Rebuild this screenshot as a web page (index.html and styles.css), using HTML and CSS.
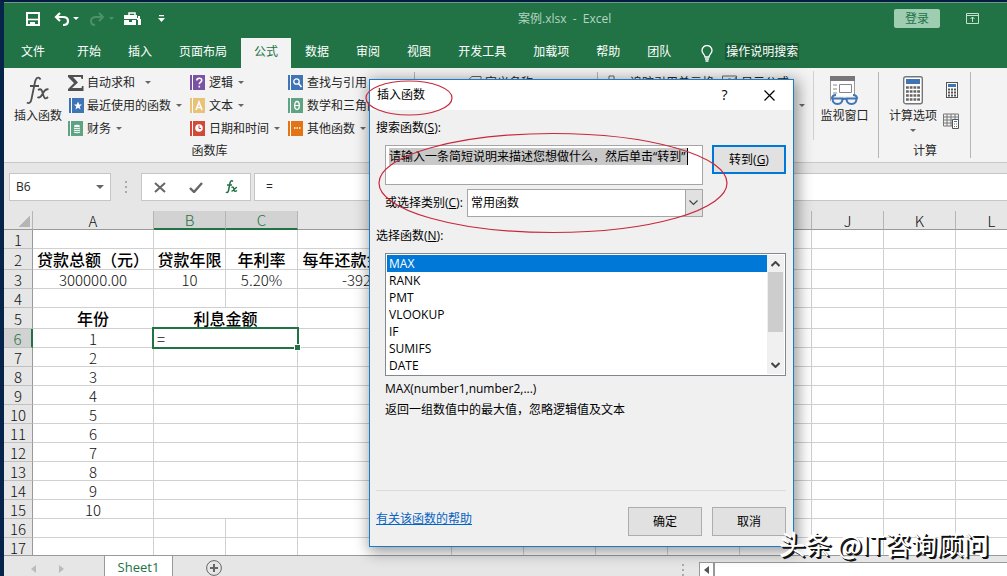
FILE: index.html
```html
<!DOCTYPE html>
<html lang="zh-CN">
<head>
<meta charset="utf-8">
<title>案例.xlsx - Excel</title>
<link rel="stylesheet" href="styles.css">
</head>
<body>
<div class="app">
  <header class="titlebar">
    <div class="quick">
      <button class="icon-btn save" aria-label="保存"><svg width="14" height="14" viewBox="0 0 14 14" fill="none" stroke="#fff" stroke-width="2"><path d="M1 1h12v12H1z"/><path d="M1 7.500h12" stroke-width="1.600"/><path d="M4 10h5v3H4z" fill="#fff" stroke="none"/></svg></button>
      <button class="icon-btn undo" aria-label="撤消"><svg width="26" height="14" viewBox="0 0 26 14" fill="none" stroke="#fff" stroke-width="2.200"><path d="M6 1 2 5l4 4M2 5h7q5 0 5 4t-5 4"/><path d="M19 5h6l-3 3z" fill="#fff" stroke="none"/></svg></button>
      <button class="icon-btn redo" aria-label="恢复"><svg width="26" height="14" viewBox="0 0 26 14" fill="none" stroke="#4c9169" stroke-width="2"><path d="m10 1 4 4-4 4M14 5H7Q2 5 2 9t4 4"/><path d="M20 5h5l-2.500 3z" fill="#4c9169" stroke="none"/></svg></button>
      <button class="icon-btn kit" aria-label="工具"><svg width="17" height="14" viewBox="0 0 17 14"><path d="M5 3V1h6v2" fill="none" stroke="#fff" stroke-width="1.500"/><path d="M0 3h13v4H0zM0 8h5v2h3V8h4v5H0z" fill="#fff"/><path d="M14 4h2v3h1v6h-3V8h-1V6h1z" fill="#fff"/></svg></button>
      <button class="icon-btn more" aria-label="自定义快速访问工具栏"><svg width="7" height="8" viewBox="0 0 7 8"><path d="M1 0h5v1.300H1zM0 3h7L3.500 7z" fill="#fff"/></svg></button>
    </div>
    <h1 class="doc-title">案例.xlsx&nbsp; -&nbsp; Excel</h1>
    <button class="login">登录</button>
    <button class="icon-btn" aria-label="功能区显示选项"><svg width="13" height="11" viewBox="0 0 13 11" fill="none" stroke="#c5e0cf"><path d="M.5.5h12v10H.5zM.5 2.500h12M6.500 9V4M4.500 6l2-2 2 2"/></svg></button>
  </header>

  <nav class="tabs">
    <button class="tab file">文件</button>
    <button class="tab">开始</button>
    <button class="tab">插入</button>
    <button class="tab">页面布局</button>
    <button class="tab active">公式</button>
    <button class="tab">数据</button>
    <button class="tab">审阅</button>
    <button class="tab">视图</button>
    <button class="tab">开发工具</button>
    <button class="tab">加载项</button>
    <button class="tab">帮助</button>
    <button class="tab">团队</button>
    <svg class="bulb" width="12" height="17" viewBox="0 0 12 17" fill="none" stroke="#fff" stroke-width="1.300"><path d="M4 12c0-2.500-3-3.300-3-6.500a5 5 0 0 1 10 0C11 8.700 8 9.500 8 12zM4 14h4M4.500 16h3"/></svg>
    <button class="tell">操作说明搜索</button>
  </nav>

  <section class="ribbon">
    <div class="group library">
      <div class="tools">
        <button class="big"><svg width="24" height="29" viewBox="0 0 24 29" fill="none" stroke="#505050" stroke-width="1.800"><path d="M14.500 3.500C13 .5 10 1 9 6L5.500 23c-.6 3.500-2.500 5-4.500 3.500M4 10h9"/><path d="M12 14c3-2 4 0 5 4s2 6 5 3M22.500 13.500c-3-1.500-4.500 2-6 4.500s-3 4.500-5 3"/></svg>插入函数</button>
        <div class="stack">
          <button class="cmd sum"><svg width="16" height="16" viewBox="0 0 16 16"><path d="M0 0h15v4h-1.500L13 2H5l5 5.500L4 13h9.500l.5-2h1.500v5H0v-2l6-6L0 2z" fill="#505050"/></svg><span>自动求和</span><i class="caret wide"></i></button>
          <button class="cmd"><svg width="16" height="16" viewBox="0 0 16 16"><path d="M1 0h15v15H1z" fill="#3f74b5"/><path d="M3.500 0v15" stroke="#fff"/><path d="m10 3.500 1.200 3H14l-2.300 2 .9 3L10 9.800l-2.600 1.700.9-3L6 6.500h2.800z" fill="#fff"/></svg><span>最近使用的函数</span><i class="caret"></i></button>
          <button class="cmd"><svg width="16" height="16" viewBox="0 0 16 16"><path d="M0 0h15v15H0z" fill="#5fa383"/><path d="M2.500 0v15" stroke="#fff"/><ellipse cx="9" cy="5" rx="3" ry="1.300" fill="#fff"/><path d="M6 7q3 1.500 6 0M6 9q3 1.500 6 0M6 11q3 1.500 6 0" fill="none" stroke="#fff" stroke-width="1.200"/></svg><span>财务</span><i class="caret"></i></button>
        </div>
        <div class="stack mid">
          <button class="cmd"><svg width="16" height="16" viewBox="0 0 16 16"><path d="M0 0h15v15H0z" fill="#7b52a3"/><path d="M2.500 0v15" stroke="#fff"/><path d="M6.800 5.500c0-3 5-3 5-.2 0 2-2.500 1.700-2.500 4M9.300 10.700v1.800" fill="none" stroke="#fff" stroke-width="1.600"/></svg><span>逻辑</span><i class="caret"></i></button>
          <button class="cmd"><svg width="16" height="16" viewBox="0 0 16 16"><path d="M0 0h15v15H0z" fill="#e9c277"/><path d="M2.500 0v15" stroke="#fff"/><path d="M6 12 9 4l3 8M7 9.500h4" fill="none" stroke="#fff" stroke-width="1.500"/></svg><span>文本</span><i class="caret"></i></button>
          <button class="cmd"><svg width="16" height="16" viewBox="0 0 16 16"><path d="M0 0h15v15H0z" fill="#d24a37"/><path d="M2.500 0v15" stroke="#fff"/><circle cx="9" cy="7" r="3.800" fill="#fff"/><path d="M9 4.500V7.500h2" fill="none" stroke="#d24a37"/></svg><span>日期和时间</span><i class="caret"></i></button>
        </div>
        <div class="stack">
          <button class="cmd"><svg width="16" height="16" viewBox="0 0 16 16"><path d="M0 0h15v15H0z" fill="#3f74b5"/><path d="M2.500 0v15" stroke="#fff"/><circle cx="8.500" cy="6.500" r="2.700" fill="none" stroke="#fff" stroke-width="1.300"/><path d="m10.500 8.500 3 3.500" stroke="#fff" stroke-width="1.600"/></svg><span>查找与引用</span><i class="caret"></i></button>
          <button class="cmd"><svg width="16" height="16" viewBox="0 0 16 16"><path d="M0 0h15v15H0z" fill="#5fa383"/><path d="M2.500 0v15" stroke="#fff"/><ellipse cx="9" cy="7.500" rx="2.300" ry="4" fill="none" stroke="#fff" stroke-width="1.300"/><path d="M7 7.500h4" stroke="#fff"/></svg><span>数学和三角函数</span><i class="caret"></i></button>
          <button class="cmd"><svg width="16" height="16" viewBox="0 0 16 16"><path d="M0 0h15v15H0z" fill="#e37416"/><path d="M2.500 0v15" stroke="#fff"/><path d="M6 7h1.500M8.500 7H10M11 7h1.500" stroke="#fff" stroke-width="1.500"/></svg><span>其他函数</span><i class="caret"></i></button>
        </div>
      </div>
      <div class="group-name">函数库</div>
    </div>
    <div class="group names">
      <div class="tools">
        <button class="cmd"><svg width="16" height="12" viewBox="0 0 16 12" fill="none" stroke="#666"><path d="M1 6 6 1.500h9v9H6z"/></svg><span>定义名称</span></button>
      </div>
    </div>
    <div class="group audit">
      <div class="tools">
        <button class="cmd trace"><svg width="16" height="16" viewBox="0 0 16 16" fill="none" stroke="#666"><path d="M1 1h5v4H1zM6 6l6 6M10 6h4v4h-4z"/></svg><span>追踪引用单元格</span></button>
        <button class="cmd show"><svg width="16" height="16" viewBox="0 0 16 16" fill="none" stroke="#666"><path d="M.5 1h14v11H.5zM3 4v5M6 4h3v3h3M14 2l-4 7"/></svg><span>显示公式</span></button>
        <i class="caret"></i>
        <button class="big watch"><svg width="29" height="29" viewBox="0 0 29 29" fill="none"><path d="M.5.5h24v24H.5z" fill="#fff" stroke="#9a9a9a"/><path d="M0 0h25v5H0z" fill="#777"/><path d="M3 9h4M3 13h4M3 17h4" stroke="#888"/><path d="M9.500 8.500h12v8h-12z" stroke="#888"/><path d="M1 20h27v9H1z" fill="#f3f3f3"/><path d="M2 23q0-4 4-4M27 23q0-4-4-4M12 23.500q2.500-1.500 5 0" stroke="#3f74b5" stroke-width="2"/><path d="M2.500 22.500h10q0 5.500-5 5.500t-5-5.500zM16.500 22.500h10q0 5.500-5 5.500t-5-5.500z" stroke="#3f74b5" stroke-width="2"/></svg>监视窗口</button>
      </div>
    </div>
    <div class="group calc">
      <div class="tools">
        <button class="big"><svg width="20" height="29" viewBox="0 0 20 29"><rect x=".7" y=".7" width="18.600" height="27" rx="2" fill="#fff" stroke="#777" stroke-width="1.400"/><path d="M3 3h14v5H3z" fill="#3f74b5"/><path d="M3 11.500h14M3 15.500h14M3 19.500h14M3 23.500h14" stroke="#666" stroke-width="2.600" stroke-dasharray="2.800 .93"/></svg>计算选项<i class="caret"></i></button>
        <div class="small-icons">
          <button class="icon-btn" aria-label="开始计算"><svg width="12" height="16" viewBox="0 0 12 16"><rect x=".5" y=".5" width="11" height="15" fill="#fff" stroke="#555"/><path d="M2 2h8v3H2z" fill="#3f74b5"/><path d="M2 7.500h8M2 10.500h8M2 13.500h8" stroke="#555" stroke-width="2" stroke-dasharray="2 1"/></svg></button>
          <button class="icon-btn" aria-label="计算工作表"><svg width="17" height="16" viewBox="0 0 17 16" fill="none" stroke="#777"><path d="M.5 1h15v12H.5zM.5 4h15M.5 7h15M.5 10h15M4 1v12M8 1v12M12 1v12"/><path d="M9.500 6.500h6v9h-6z" fill="#fff" stroke="#555"/><path d="M11 8.500h3" stroke="#3f74b5"/><path d="M11 11h3M11 13.500h3" stroke-dasharray="1 1"/></svg></button>
        </div>
      </div>
      <div class="group-name">计算</div>
    </div>
  </section>

  <section class="formula-bar">
    <div class="name-box"><input type="text" value="B6" aria-label="名称框"><i class="caret big-caret"></i></div>
    <div class="dots"></div>
    <div class="entry">
      <button class="icon-btn" aria-label="取消输入"><svg width="12" height="11" viewBox="0 0 12 11"><path d="m1 1 10 9M11 1 1 10" stroke="#666" stroke-width="2"/></svg></button>
      <button class="icon-btn" aria-label="输入"><svg width="14" height="11" viewBox="0 0 14 11"><path d="m1 6 4 4 8-9" fill="none" stroke="#666" stroke-width="2.400"/></svg></button>
      <button class="icon-btn" aria-label="插入函数"><svg width="13" height="14" viewBox="0 0 13 14" fill="none" stroke="#217346" stroke-width="1.500"><path d="M8 1.500C6.500 0 5.500 1 5 3L3.500 10.500c-.4 2-1.500 2.500-2.500 1.500M2 5h5"/><path d="M6.500 7.500c2-1 2 0 2.500 2s1 2.500 3 1M12 7.500c-2-.5-3 4-5.500 3.500"/></svg></button>
    </div>
    <input class="formula" type="text" value="=" aria-label="编辑栏">
  </section>

  <main class="sheet">
    <table class="grid">
      <colgroup><col class="c-num"><col class="c-a"><col class="c-std"><col class="c-std"><col class="c-d"><col class="c-std"><col class="c-std"><col class="c-std"><col class="c-std"><col class="c-std"><col class="c-std"><col class="c-std"><col class="c-std"></colgroup>
      <thead><tr><th class="corner"></th><th>A</th><th class="on">B</th><th class="on">C</th><th>D</th><th>E</th><th>F</th><th>G</th><th>H</th><th>I</th><th>J</th><th>K</th><th>L</th></tr></thead>
      <tbody>
        <tr><th>1</th><td></td><td></td><td></td><td></td><td></td><td></td><td></td><td></td><td></td><td></td><td></td><td></td></tr>
        <tr class="tall head"><th>2</th><td>贷款总额（元）</td><td>贷款年限</td><td>年利率</td><td>每年还款金额（元）</td><td></td><td></td><td></td><td></td><td></td><td></td><td></td><td></td></tr>
        <tr><th>3</th><td>300000.00</td><td>10</td><td>5.20%</td><td>-39229.60</td><td></td><td></td><td></td><td></td><td></td><td></td><td></td><td></td></tr>
        <tr><th>4</th><td></td><td></td><td></td><td></td><td></td><td></td><td></td><td></td><td></td><td></td><td></td><td></td></tr>
        <tr class="tall head"><th>5</th><td>年份</td><td colspan="2">利息金额</td><td></td><td></td><td></td><td></td><td></td><td></td><td></td><td></td><td></td></tr>
        <tr><th class="on">6</th><td>1</td><td colspan="2" class="selected">=<span class="frame"></span></td><td></td><td></td><td></td><td></td><td></td><td></td><td></td><td></td><td></td></tr>
        <tr><th>7</th><td>2</td><td colspan="2"></td><td></td><td></td><td></td><td></td><td></td><td></td><td></td><td></td><td></td></tr>
        <tr><th>8</th><td>3</td><td colspan="2"></td><td></td><td></td><td></td><td></td><td></td><td></td><td></td><td></td><td></td></tr>
        <tr><th>9</th><td>4</td><td colspan="2"></td><td></td><td></td><td></td><td></td><td></td><td></td><td></td><td></td><td></td></tr>
        <tr><th>10</th><td>5</td><td colspan="2"></td><td></td><td></td><td></td><td></td><td></td><td></td><td></td><td></td><td></td></tr>
        <tr><th>11</th><td>6</td><td colspan="2"></td><td></td><td></td><td></td><td></td><td></td><td></td><td></td><td></td><td></td></tr>
        <tr><th>12</th><td>7</td><td colspan="2"></td><td></td><td></td><td></td><td></td><td></td><td></td><td></td><td></td><td></td></tr>
        <tr><th>13</th><td>8</td><td colspan="2"></td><td></td><td></td><td></td><td></td><td></td><td></td><td></td><td></td><td></td></tr>
        <tr><th>14</th><td>9</td><td colspan="2"></td><td></td><td></td><td></td><td></td><td></td><td></td><td></td><td></td><td></td></tr>
        <tr><th>15</th><td>10</td><td colspan="2"></td><td></td><td></td><td></td><td></td><td></td><td></td><td></td><td></td><td></td></tr>
        <tr><th>16</th><td></td><td></td><td></td><td></td><td></td><td></td><td></td><td></td><td></td><td></td><td></td><td></td></tr>
        <tr><th>17</th><td></td><td></td><td></td><td></td><td></td><td></td><td></td><td></td><td></td><td></td><td></td><td></td></tr>
      </tbody>
    </table>
  </main>

  <footer class="sheet-bar">
    <div class="sheet-nav">
      <svg width="5" height="8" viewBox="0 0 5 8"><path d="M5 0v8L0 4z" fill="#bbb"/></svg>
      <svg width="5" height="8" viewBox="0 0 5 8"><path d="M0 0v8l5-4z" fill="#bbb"/></svg>
    </div>
    <button class="sheet-tab">Sheet1</button>
    <button class="icon-btn add" aria-label="新工作表"><svg width="16" height="16" viewBox="0 0 16 16" fill="none" stroke="#666"><circle cx="8" cy="8" r="7.400"/><path d="M8 4v8M4 8h8" stroke-width="2"/></svg></button>
    <div class="dots"></div>
    <div class="hscroll">
      <button class="icon-btn" aria-label="向左滚动"><svg width="5" height="8" viewBox="0 0 5 8"><path d="M5 0v8L0 4z" fill="#555"/></svg></button>
      <div class="track"></div>
    </div>
  </footer>
</div>

<form class="dialog" role="dialog" aria-labelledby="dlg-title">
  <div class="dlg-bar">
    <h2 id="dlg-title">插入函数</h2>
    <button type="button" class="dlg-btn help">?</button>
    <button type="button" class="dlg-btn" aria-label="关闭"><svg width="11" height="11" viewBox="0 0 11 11"><path d="m.5.5 10 10M10.500.5l-10 10" stroke="#000" stroke-width="1.200"/></svg></button>
  </div>
  <div class="dlg-body">
    <label for="query">搜索函数(<u>S</u>):</label>
    <div class="search-row">
      <div class="fields">
        <textarea id="query" rows="2">请输入一条简短说明来描述您想做什么，然后单击“转到”</textarea>
        <div class="category">
          <label for="cat">或选择类别(<u>C</u>):</label>
          <div class="drop">
            <select id="cat"><option>常用函数</option></select>
            <svg width="9" height="6" viewBox="0 0 9 6"><path d="m.5.5 4 4 4-4" fill="none" stroke="#444" stroke-width="1.200"/></svg>
          </div>
        </div>
      </div>
      <button type="button" class="push primary">转到(<u>G</u>)</button>
    </div>
    <label class="list-label" for="funcs">选择函数(<u>N</u>):</label>
    <div class="list-box">
      <select id="funcs" size="7">
        <option selected>MAX</option><option>RANK</option><option>PMT</option><option>VLOOKUP</option><option>IF</option><option>SUMIFS</option><option>DATE</option>
      </select>
      <div class="vscroll">
        <svg width="9" height="6" viewBox="0 0 9 6"><path d="m.5 5 4-4 4 4" fill="none" stroke="#444" stroke-width="2"/></svg>
        <div class="thumb"></div>
        <svg width="9" height="6" viewBox="0 0 9 6"><path d="m.5 1 4 4 4-4" fill="none" stroke="#444" stroke-width="2"/></svg>
      </div>
    </div>
    <div class="about">
      <p>MAX(number1,number2,...)</p>
      <p>返回一组数值中的最大值，忽略逻辑值及文本</p>
    </div>
    <div class="dlg-foot">
      <a href="#">有关该函数的帮助</a>
      <button type="button" class="push">确定</button>
      <button type="button" class="push">取消</button>
    </div>
  </div>
  <svg class="marks" width="425" height="468" viewBox="0 0 425 468" fill="none" stroke="#c8283c" stroke-width="1.200"><ellipse cx="39" cy="18" rx="43" ry="17"/><ellipse cx="183" cy="103" rx="174" ry="49.500"/></svg>
</form>
<div class="credit">头条 @IT咨询顾问</div>
</body>
</html>
```
FILE: styles.css
```css
* { box-sizing: border-box; }
body {
  margin: 0;
  font: 12px/16px "Open Sans", "Noto Sans CJK SC", sans-serif;
  color: #262626;
  overflow: hidden;
}
button, input, select, textarea { font: inherit; color: inherit; }
button { border: 0; background: none; padding: 0; white-space: nowrap; }
h1, h2, p { margin: 0; font-size: 12px; font-weight: 400; }
svg { display: block; flex: none; }

.app {
  height: 100vh;
  display: flex;
  flex-direction: column;
  border-left: 4px solid #06244a;
  border-top: 2px solid #051c40;
  background: #e6e6e6;
}
.icon-btn { display: flex; align-items: center; justify-content: center; }
.caret {
  width: 0;
  height: 0;
  border: 3px solid transparent;
  border-top-color: #666;
  border-bottom: 0;
}

/* title bar and tabs */
.titlebar {
  flex: none;
  height: 36px;
  border-top: 1px solid #6f9a8a;
  background: #217346;
  display: flex;
  align-items: center;
  padding: 0 28px 4px 0;
}
.quick { width: 514px; display: flex; align-items: center; padding-left: 22px; }
.undo { margin-left: 14px; }
.redo { margin-left: 9px; }
.kit { margin-left: 9px; }
.more { margin-left: 17px; }
.doc-title { flex: 1; color: #b5d5c2; }
.login {
  width: 46px;
  height: 19px;
  line-height: 17px;
  border-radius: 2px;
  background: #9fcdb2;
  color: #217346;
  margin-right: 26px;
}
.tabs {
  flex: none;
  height: 30px;
  background: #217346;
  display: flex;
  align-items: stretch;
  gap: 1px;
  padding-left: 4px;
}
.tab { padding: 0 13px 2px; color: #fff; }
.tab.file { padding-right: 18px; }
.tab.active { background: #f3f3f3; color: #217346; }
.bulb { align-self: center; margin: 0 11px 0 16px; }
.tell { align-self: center; height: 17px; line-height: 15px; padding: 0 1px; margin-bottom: 4px; background: #185c37; color: #fff; }

/* ribbon */
.ribbon {
  flex: none;
  display: flex;
  height: 95px;
  background: #f3f3f3;
  border-bottom: 1px solid #c8c8c8;
}
.group {
  flex: none;
  display: flex;
  flex-direction: column;
  padding-top: 3px;
  background: linear-gradient(#b5b5b5, #b5b5b5) right 4px / 1px 86px no-repeat;
}
.tools { flex: none; display: flex; height: 69px; }
.group-name { text-align: center; line-height: 22px; }
.library { width: 411px; }
.names { width: 183px; padding-left: 51px; }
.audit { width: 281px; padding-left: 10px; }
.calc { width: 92px; }
.big {
  width: 64px;
  display: flex;
  flex-direction: column;
  align-items: center;
  padding-top: 5px;
  line-height: 22px;
  padding-left: 4px;
}
.big .caret { margin-top: 2px; }
.stack { width: 122px; }
.stack.mid { width: 98px; }
.cmd { height: 23px; display: flex; align-items: center; gap: 3px; }
.cmd .caret { margin-left: 2px; }
.cmd .caret.wide { margin-left: 7px; }
.trace { width: 114px; gap: 6px; align-items: flex-start; padding-top: 4px; }
.names .cmd, .show { align-items: flex-start; padding-top: 4px; }
.audit > .tools > .caret { margin: 33px 8px 0 10px; }
.watch { width: 62px; padding-left: 0; border-left: 1px solid #d0d0d0; }
.calc .big { padding-left: 4px; }
.small-icons { display: flex; flex-direction: column; align-items: center; gap: 15px; padding: 11px 0 0; }

/* formula bar */
.formula-bar { flex: none; display: flex; align-items: stretch; height: 48px; padding: 10px 0 10px 5px; }
.name-box, .entry, .formula { background: #fff; border: 1px solid #c6c6c6; }
.name-box { width: 102px; display: flex; align-items: center; padding: 0 6px; }
.name-box input { flex: 1; min-width: 0; border: 0; padding: 0; background: none; }
.big-caret { border-width: 4px; border-bottom: 0; }
.dots { width: 2px; background: repeating-linear-gradient(#aaa 0 2px, transparent 2px 5px); }
.formula-bar .dots { height: 12px; margin: 8px 14px 0; }
.entry { width: 110px; display: flex; align-items: center; justify-content: space-between; padding: 0 12px; }
.formula { flex: 1; border-right: 0; margin-left: 3px; padding: 0 11px; }

/* worksheet */
.sheet { flex: 1; min-height: 0; overflow: hidden; background: #fff; }
.grid { table-layout: fixed; border-collapse: separate; border-spacing: 0; width: 1024px; font: 15px/16px "Noto Sans CJK SC", sans-serif; color: #111; }
.c-num { width: 29px; }
.c-a { width: 121px; }
.c-std { width: 72px; }
.c-d { width: 154px; }
.grid th, .grid td { height: 19px; padding: 2px 0 0; text-align: center; white-space: nowrap; border: 0 solid #d0d0d0; border-width: 0 1px 1px 0; font-weight: 300; }
.grid th { background: #e6e6e6; border-bottom-color: #c0c0c0; }
.grid tbody th { border-right-color: #999; }
.grid thead th { border-right-color: #b5b5b5; border-bottom-color: #999; }
.grid .corner { background: linear-gradient(135deg, transparent 50%, #b5b5b5 50%) 15px 5px / 11px 11px no-repeat #e6e6e6; }
.grid .on { background: #d2d2d2; color: #217346; }
.grid thead .on { border-bottom: 2px solid #217346; padding-top: 1px; }
.grid tbody .on { border-right: 2px solid #217346; }
.grid .tall th, .grid .tall td { height: 21px; }
.grid .head td { font-size: 16px; line-height: 18px; font-weight: 500; color: #000; padding: 0; }
.grid .selected { position: relative; text-align: left; padding-left: 3px; }
.frame { position: absolute; inset: -2px; border: 2px solid #217346; }
.frame::after { content: ""; position: absolute; right: -3px; bottom: -3px; width: 5px; height: 5px; background: #217346; outline: 1px solid #fff; }

.sheet-bar { flex: none; display: flex; height: 21px; border-top: 1px solid #999; }
.sheet-nav { width: 100px; display: flex; gap: 23px; padding: 9px 0 0 27px; }
.sheet-tab { width: 69px; background: #fff; color: #217346; font-size: 13px; border: 1px solid #999; border-width: 0 1px; padding-top: 2px; }
.add { margin: 4px 0 0 33px; height: 16px; }
.sheet-bar .dots { height: 12px; margin: 8px 15px 0 auto; }
.hscroll { width: 308px; display: flex; margin-top: 6px; background: #fff; border: 1px solid #999; border-width: 1px 0 0 1px; }
.hscroll .icon-btn { width: 15px; border-right: 2px solid #999; }
.track { flex: 1; }

/* dialog */
.dialog {
  position: absolute;
  left: 369px;
  top: 79px;
  width: 425px;
  background: #f0f0f0;
  border: 1px solid #1a7cc9;
  box-shadow: 2px 3px 14px 2px rgba(0, 0, 0, .4);
  color: #000;
}
.dlg-bar { height: 30px; display: flex; align-items: center; background: #fff; padding: 0 18px 0 7px; }
.dlg-bar h2 { flex: 1; }
.dlg-btn { width: 11px; }
.help { margin-right: 34px; font-size: 14px; }
.dlg-body { padding: 10px 7px 10px 6px; }
.dlg-body label { display: block; }
.search-row { display: flex; justify-content: space-between; align-items: flex-start; padding: 9px 0 0 9px; }
.fields { width: 318px; }
textarea {
  display: block;
  width: 100%;
  height: 40px;
  resize: none;
  overflow: hidden;
  border: 1px solid #a5a5a5;
  border-radius: 0;
  padding: 2px 3px;
  line-height: 17px;
  background: linear-gradient(90deg, #c8c8c8 298px, #000 298px) 3px 2px / 299px 17px no-repeat #fff;
}
.category { display: flex; align-items: center; justify-content: space-between; margin-top: 4px; }
.drop {
  width: 236px;
  height: 28px;
  display: flex;
  align-items: center;
  border: 1px solid #a5a5a5;
  background: linear-gradient(90deg, #a5a5a5 1px, #e1e1e1 1px) right / 17px 100% no-repeat #fff;
  padding-right: 4px;
}
.drop select { flex: 1; appearance: none; border: 0; background: none; padding: 0 3px; }
.push { width: 74px; height: 29px; background: #e1e1e1; border: 1px solid #adadad; }
.push.primary { border: 2px solid #0078d7; }
.dlg-body .list-label { margin-top: 11px; }
.list-box { display: flex; height: 123px; margin: 9px 0 0 9px; border: 1px solid #82878f; background: #fff; padding: 1px; }
#funcs { flex: 1; height: 119px; border: 0; padding: 0; outline: 0; overflow: hidden; background: #fff; border-radius: 0; }
#funcs::-webkit-scrollbar { display: none; }
#funcs option { height: 17px; min-height: 17px; line-height: 17px; padding: 0 2px; color: #000; }
#funcs option:checked { background: linear-gradient(#0078d7, #0078d7); color: #fff; }
.vscroll { width: 17px; display: flex; flex-direction: column; align-items: center; background: #f0f0f0; padding: 6px 0; }
.thumb { width: 15px; height: 60px; background: #cdcdcd; margin: 5px 0 auto; }
.about { padding: 4px 0 0 9px; height: 114px; line-height: 17px; }
.about p + p { margin-top: 4px; }
.dlg-foot { display: flex; align-items: center; gap: 10px; border-top: 1px solid #dadada; padding-top: 16px; }
.dlg-foot a { flex: 1; color: #0563c1; margin-bottom: 6px; }
.marks { position: absolute; left: 0; top: 0; overflow: visible; pointer-events: none; }

.credit {
  position: absolute;
  right: 18px;
  bottom: 16px;
  font: 26px/32px "Noto Sans CJK SC", sans-serif;
  color: #fff;
  text-shadow: 1px 1px 0 #111, 2px 2px 0 #111, -1px -1px 0 #fff;
}
```
